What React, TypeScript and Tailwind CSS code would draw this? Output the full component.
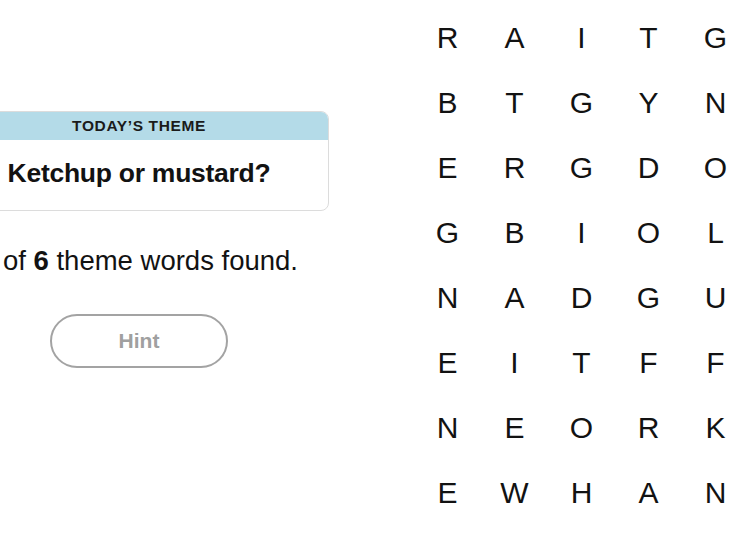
import React from "react";

const rows = [
  "RAITGE",
  "BTGYNS",
  "ERGDOT",
  "GBIOLA",
  "NADGUR",
  "EITFFD",
  "NEORKS",
  "EWHANT",
];

export default function App() {
  return (
    <div
      className="relative w-[750px] h-[536px] overflow-hidden bg-white text-[#121212]"
      style={{ fontFamily: "'Liberation Sans', Arial, sans-serif" }}
    >
      <div className="flex flex-row">
        {/* Left panel */}
        <div className="ml-[-51px] w-[380px] shrink-0 flex flex-col items-center pt-[111px]">
          <div className="w-full rounded-[8px] border border-[#dcdcdc] overflow-hidden">
            <div className="h-[28px] bg-[#b4dbe8] flex items-center justify-center text-[15.5px] font-bold tracking-[0.04em] text-[#1b1b1b]">
              TODAY’S THEME
            </div>
            <div className="h-[70px] flex items-center justify-center text-[26.5px] font-bold tracking-[-0.01em] pb-[2px]">
              Ketchup or mustard?
            </div>
          </div>
          <div className="mt-[35px] text-[27.5px] leading-[30px] whitespace-nowrap">
            0 of <span className="font-bold">6</span> theme words found.
          </div>
          <div className="mt-[38px] w-[178px] h-[54px] rounded-full border-2 border-[#a3a3a3] flex items-center justify-center text-[21px] font-bold text-[#a0a0a0]">
            Hint
          </div>
        </div>
        {/* Grid */}
        <div className="ml-[85px] shrink-0 pt-[5px] grid grid-cols-[repeat(6,67px)] auto-rows-[65px]">
          {rows.flatMap((r, ri) =>
            r.split("").map((ch, ci) => (
              <div
                key={`${ri}-${ci}`}
                className="flex items-center justify-center text-[30px] leading-none"
              >
                {ch}
              </div>
            ))
          )}
        </div>
      </div>
    </div>
  );
}
